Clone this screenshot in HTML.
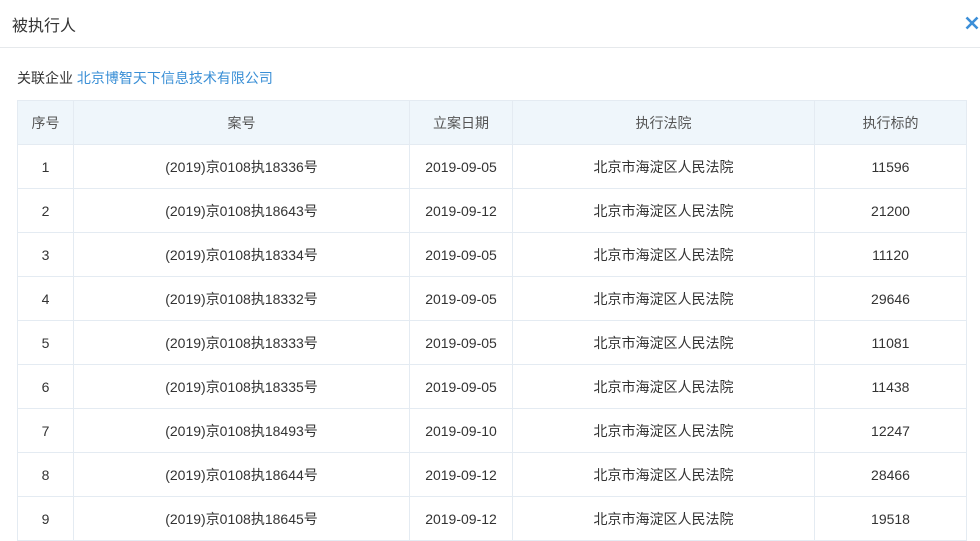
<!DOCTYPE html>
<html><head><meta charset="utf-8"><style>
*{margin:0;padding:0;box-sizing:border-box}
body{width:980px;height:538px;overflow:hidden;background:#fff;font-family:"Liberation Sans","Noto Sans CJK SC",sans-serif;color:#333;font-size:14px}
.top{height:48px;border-bottom:1px solid #e6e9ec;position:relative}
.top .t{position:absolute;left:12px;top:12px;font-size:16px;color:#333}
.x{position:absolute;left:965px;top:16px}
.rel{position:absolute;left:17px;top:68px;font-size:14px;color:#333}
.rel a{color:#3a8fd6;text-decoration:none}
table{position:absolute;left:17px;top:100px;width:950px;border-collapse:collapse;table-layout:fixed}
td,th{border:1px solid #e4ebf2;height:44px;text-align:center;font-weight:normal;font-size:14px;color:#333}
th{background:#eff6fb;color:#555}
</style></head><body>
<div class="top"><span class="t">被执行人</span>
<svg class="x" width="14" height="14" viewBox="0 0 14 14"><path d="M1.5 1.5L12.5 12.5M12.5 1.5L1.5 12.5" stroke="#3c8fd8" stroke-width="2.6"/></svg></div>
<div class="rel">关联企业 <a>北京博智天下信息技术有限公司</a></div>
<table>
<colgroup><col style="width:56px"><col style="width:336px"><col style="width:103px"><col style="width:302px"><col></colgroup>
<tr><th>序号</th><th>案号</th><th>立案日期</th><th>执行法院</th><th>执行标的</th></tr>
<tr><td>1</td><td>(2019)京0108执18336号</td><td>2019-09-05</td><td>北京市海淀区人民法院</td><td>11596</td></tr>
<tr><td>2</td><td>(2019)京0108执18643号</td><td>2019-09-12</td><td>北京市海淀区人民法院</td><td>21200</td></tr>
<tr><td>3</td><td>(2019)京0108执18334号</td><td>2019-09-05</td><td>北京市海淀区人民法院</td><td>11120</td></tr>
<tr><td>4</td><td>(2019)京0108执18332号</td><td>2019-09-05</td><td>北京市海淀区人民法院</td><td>29646</td></tr>
<tr><td>5</td><td>(2019)京0108执18333号</td><td>2019-09-05</td><td>北京市海淀区人民法院</td><td>11081</td></tr>
<tr><td>6</td><td>(2019)京0108执18335号</td><td>2019-09-05</td><td>北京市海淀区人民法院</td><td>11438</td></tr>
<tr><td>7</td><td>(2019)京0108执18493号</td><td>2019-09-10</td><td>北京市海淀区人民法院</td><td>12247</td></tr>
<tr><td>8</td><td>(2019)京0108执18644号</td><td>2019-09-12</td><td>北京市海淀区人民法院</td><td>28466</td></tr>
<tr><td>9</td><td>(2019)京0108执18645号</td><td>2019-09-12</td><td>北京市海淀区人民法院</td><td>19518</td></tr>
</table>
</body></html>
